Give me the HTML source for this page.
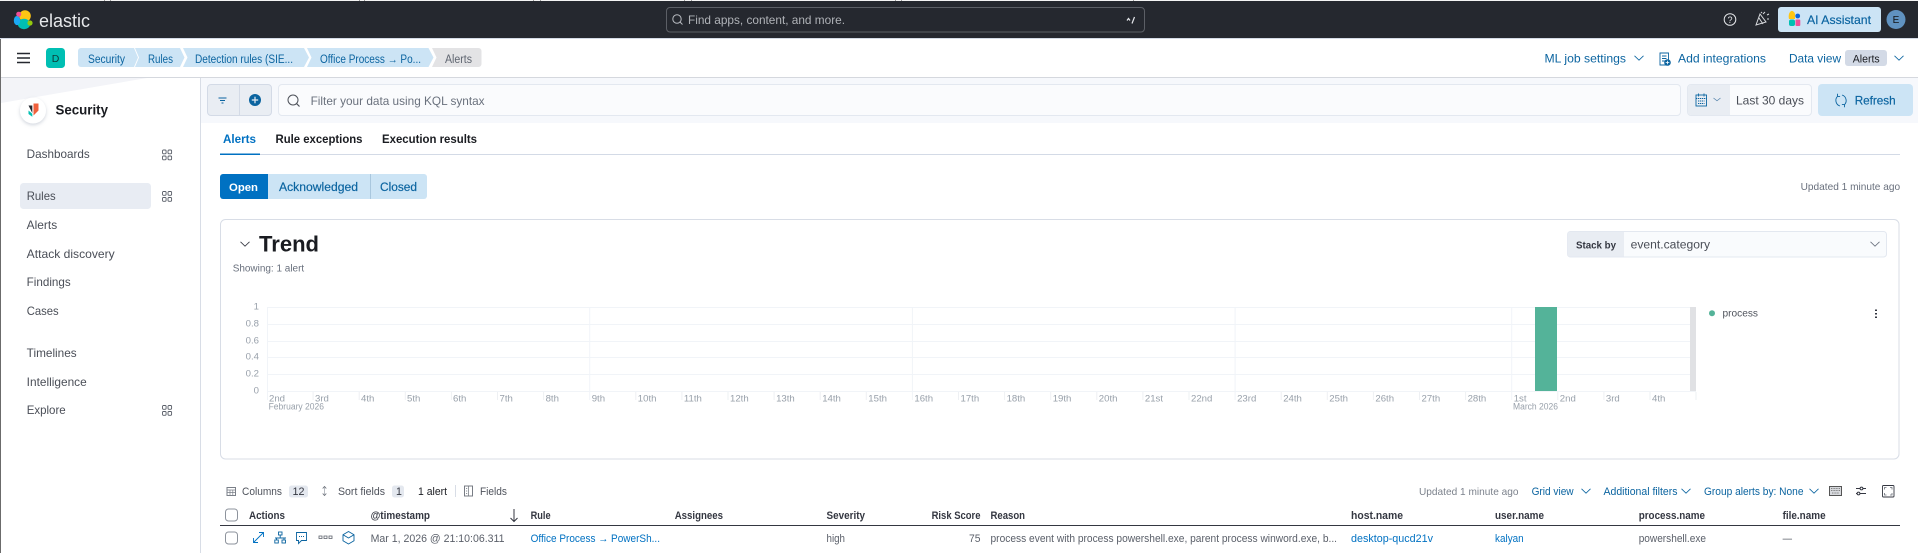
<!DOCTYPE html>
<html lang="en"><head><meta charset="utf-8"><title>Alerts - Elastic Security</title>
<style>
html,body{margin:0;padding:0;background:#fff;width:1918px;height:553px;overflow:hidden}
svg{display:block;position:absolute;left:0;top:0;filter:blur(.35px)}
text{font-family:"Liberation Sans",sans-serif;font-size:11.5px;fill:#343741;white-space:pre}
.nav{fill:#4a4e57;font-size:11.6px}
.blue{fill:#0b64a0}
.med{stroke:#0b64a0;stroke-width:.18px}
.link{fill:#0071c2;font-size:10.6px}
.b{font-weight:700}
.th{font-weight:700;font-size:10.6px;fill:#343741}
.td{font-size:10.6px;fill:#5a5f69}
.tb{font-size:10.6px;fill:#4f535c}
.tbb{font-size:10.6px;fill:#0b64a0}
.tick{font-size:9.6px;fill:#98a0aa}
.yl{font-size:9.6px;fill:#98a0aa;text-anchor:end}
.ic{fill:none;stroke:#0b64a0;stroke-width:.9}
.grid{stroke:#f1f4f8;stroke-width:1}
</style></head><body>
<svg width="1918" height="553" viewBox="0 0 1918 553" xmlns="http://www.w3.org/2000/svg">
<defs>
<path id="chev" d="M-4.5-2.200 0 2.200 4.500-2.200" fill="none" stroke-width=".85"/>
<g id="apps" fill="none" stroke="#5a5f69" stroke-width=".9"><rect x=".5" y=".5" width="3.600" height="3.800" rx="1"/><rect x="6" y=".5" width="3.600" height="3.800" rx="1"/><rect x=".5" y="6.500" width="3.600" height="3.800" rx="1"/><rect x="6" y="6.500" width="3.600" height="3.800" rx="1"/></g>
<filter id="sh" x="-40%" y="-40%" width="180%" height="180%"><feDropShadow dx="0" dy="1.500" stdDeviation="1.800" flood-color="#98a2b3" flood-opacity=".45"/></filter>
</defs>

<!-- top bar -->
<rect width="1918" height="1" fill="#f4f4f4"/>
<path d="M104.500 0v1M110.500 0v1M359.500 0v1M364.500 0v1M533.500 0v1M540.500 0v1M684.500 0v1M691.500 0v1M895.500 0v1M901.500 0v1M1133.500 0v1" stroke="#9a9a9a"/>
<rect y="1" width="1918" height="37" fill="#25282f"/>
<rect y="38" width="1918" height="1" fill="#d3dae6"/>
<g>
<circle cx="25" cy="16" r="5.800" fill="#fec514"/>
<ellipse cx="24" cy="24" rx="6.200" ry="5.200" fill="#00bfb3"/>
<ellipse cx="17" cy="20.500" rx="3.200" ry="4.600" fill="#1ba9f5"/>
<circle cx="18.700" cy="14.200" r="2.500" fill="#f04e98"/>
<circle cx="30" cy="23" r="2.600" fill="#93c90e"/>
</g>
<text x="39" y="27" style="font-size:18px;fill:#e6e8eb" textLength="51" lengthAdjust="spacingAndGlyphs">elastic</text>

<rect x="666.500" y="7.500" width="478" height="24.500" rx="3.500" fill="#25282f" stroke="#5c5f66"/>
<circle cx="677" cy="19" r="4.200" fill="none" stroke="#b9bcc2"/><path d="M680 22l2.500 2.500" stroke="#b9bcc2"/>
<text x="688" y="24.200" style="font-size:12px;fill:#b0b3b8" textLength="157" lengthAdjust="spacingAndGlyphs">Find apps, content, and more.</text>
<path d="M1127 20.500l1.500-2 1.500 2M1132 23.500l2.500-6.500" fill="none" stroke="#e4e6ea" stroke-width="1.200"/>

<circle cx="1730" cy="19.500" r="5.800" fill="none" stroke="#e6e8eb"/>
<text x="1730" y="22.800" style="font-size:9px;fill:#e6e8eb;text-anchor:middle">?</text>
<path d="M1756 25l4-11 6 8zM1759 18l4 6M1763 14l2-2M1767 15l2-1M1767 19l2 0M1761 13l1-1" fill="none" stroke="#d8dade"/>
<rect x="1778" y="7" width="103" height="25" rx="3" fill="#cce4f5"/>
<path d="M1789 19a3 5 0 0 1 6-5v5z" fill="#fec514"/>
<rect x="1789" y="19.500" width="6" height="6.500" rx="2" fill="#00bfb3"/>
<circle cx="1797.700" cy="16" r="2.400" fill="#0b64dd"/>
<rect x="1795.500" y="19.500" width="4.800" height="6.500" rx="1" fill="#f04e98"/>
<text x="1807" y="24.200" class="blue med" style="font-size:12px" textLength="64" lengthAdjust="spacingAndGlyphs">AI Assistant</text>
<circle cx="1896" cy="19.500" r="9.500" fill="#6092c0"/>
<text x="1896" y="23" style="font-size:10px;text-anchor:middle;fill:#111">E</text>

<!-- header -->
<path d="M17 53.500h13M17 58h13M17 62.500h13" stroke="#25282f" stroke-width="1.600"/>
<rect x="46" y="48" width="19" height="20" rx="3.500" fill="#00bfb3"/>
<text x="55.500" y="62" style="font-size:10.500px;text-anchor:middle;fill:#0d3b38">D</text>
<path d="M81 48H134L138 57.500 134 67H81a3 3 0 0 1-3-3V51a3 3 0 0 1 3-3Z" fill="#cce4f5"/>
<path d="M135 48H180L184.500 57.500 180 67H135L139 57.500Z" fill="#cce4f5"/>
<path d="M183 48H304L309 57.500 304 67H183L187.500 57.500Z" fill="#cce4f5"/>
<path d="M307 48H428.500L433.500 57.500 428.500 67H307L311.500 57.500Z" fill="#cce4f5"/>
<path d="M432 48H478.500a3 3 0 0 1 3 3V64a3 3 0 0 1-3 3H432L436.500 57.500Z" fill="#e3e3e5"/>
<text x="88" y="63" class="blue" textLength="37" lengthAdjust="spacingAndGlyphs">Security</text>
<text x="148" y="63" class="blue" textLength="25" lengthAdjust="spacingAndGlyphs">Rules</text>
<text x="195" y="63" class="blue" textLength="98" lengthAdjust="spacingAndGlyphs">Detection rules (SIE...</text>
<text x="320" y="63" class="blue" textLength="101" lengthAdjust="spacingAndGlyphs">Office Process → Po...</text>
<text x="445" y="63" style="fill:#5f6570" textLength="27" lengthAdjust="spacingAndGlyphs">Alerts</text>

<text x="1544.500" y="62.300" class="blue" style="font-size:12px" textLength="81.500" lengthAdjust="spacingAndGlyphs">ML job settings</text>
<use href="#chev" x="1639" y="58" stroke="#0b64a0"/>
<path d="M1660 53h8.500v12h-8.500z" class="ic"/><path d="M1662 56h4.500M1662 58.500h4.500M1662 61h3" class="ic"/><circle cx="1667.500" cy="62.500" r="3.300" fill="#0b64a0"/><path d="M1665.700 62.500h3.600M1667.500 60.700v3.600" stroke="#fff" stroke-width=".8"/>
<text x="1678" y="62.300" class="blue" style="font-size:12px" textLength="88" lengthAdjust="spacingAndGlyphs">Add integrations</text>
<text x="1789" y="62.300" class="blue" style="font-size:12px" textLength="52" lengthAdjust="spacingAndGlyphs">Data view</text>
<rect x="1845" y="50" width="42" height="16" rx="3" fill="#d3dae6"/>
<text x="1852.700" y="62.300" style="font-size:11px;fill:#1a1c21" textLength="27" lengthAdjust="spacingAndGlyphs">Alerts</text>
<use href="#chev" x="1899" y="58" stroke="#0b64a0"/>

<rect y="77" width="1918" height="1" fill="#d5d8de"/>

<!-- search row -->
<rect x="200" y="78" width="1718" height="45" fill="#f6f8fc"/>
<rect x="207.500" y="84.500" width="64" height="31" rx="3.500" fill="#e9edf3" stroke="#d3dae6"/>
<path d="M239.500 85v30" stroke="#d3dae6"/>
<path d="M218.500 98h8M220 100.500h5M221.500 103h2" stroke="#0b64a0"/>
<circle cx="255" cy="100" r="6" fill="#0b64a0"/><path d="M251.800 100h6.400M255 96.800v6.400" stroke="#e9edf3" stroke-width="1.200"/>
<rect x="278.500" y="84.500" width="1402" height="31" rx="3.500" fill="#fafbfd" stroke="#e3e8f0"/>
<circle cx="293" cy="100" r="5" fill="none" stroke="#4d5159"/><path d="M296.500 103.500l3 3" stroke="#4d5159" stroke-width="1.200"/>
<text x="310.600" y="105.200" style="font-size:12px;fill:#6a717d" textLength="174" lengthAdjust="spacingAndGlyphs">Filter your data using KQL syntax</text>
<rect x="1687.500" y="84.500" width="124" height="31" rx="3.500" fill="#fafbfd" stroke="#e3e8f0"/>
<path d="M1691 85H1730V115H1691a3 3 0 0 1-3-3V88a3 3 0 0 1 3-3z" fill="#e9edf3"/>
<rect x="1696" y="95" width="10.500" height="11" class="ic"/><path d="M1696 98.500h10.500M1698.500 93.500v3M1704 93.500v3M1698 101h6.500M1698 103.500h6.500" class="ic" stroke-dasharray="1.300 .7"/>
<path d="M1713.500 98l3.500 2.800 3.500-2.800" fill="none" stroke="#5a86ad" stroke-width=".8"/>
<text x="1736" y="104.300" style="font-size:12px;fill:#4a4e57" textLength="68" lengthAdjust="spacingAndGlyphs">Last 30 days</text>
<rect x="1818" y="84" width="95" height="32" rx="4" fill="#cce4f5"/>
<path d="M1837.700 96.200A5.800 5.800 0 0 0 1840 106M1844.300 104.800A5.800 5.800 0 0 0 1842 95M1837.500 93.800v2.600h2.600M1844.500 107.200v-2.600h-2.600" class="ic"/>
<text x="1854.700" y="104.300" class="blue med" style="font-size:12px" textLength="41" lengthAdjust="spacingAndGlyphs">Refresh</text>

<!-- sidebar -->
<rect x="0" y="39" width="1" height="514" fill="#6b6b6b"/>
<path d="M1 78H147L1 103Z" fill="#f3f4f8"/>
<rect x="200" y="78" width="1" height="475" fill="#d8dde6"/>
<circle cx="33" cy="110.500" r="13" fill="#fff" filter="url(#sh)"/>
<path d="M33.500 103.500h5v7l-5 5z" fill="#f0603c"/><path d="M28.500 105.500h3.800v7.500z" fill="#25282f"/><path d="M28.500 110.500l3.800 3.300v3l-3.800-2.800z" fill="#00bfb3"/>
<text x="55.500" y="114.300" class="b" style="font-size:13.500px;fill:#1a1c21" textLength="52.500" lengthAdjust="spacingAndGlyphs">Security</text>
<text x="26.700" y="158.200" class="nav" textLength="63" lengthAdjust="spacingAndGlyphs">Dashboards</text>
<use href="#apps" x="162" y="149.500"/>
<rect x="20" y="183" width="131" height="26" rx="3.500" fill="#e8ecf3"/>
<text x="26.700" y="200.200" class="nav" textLength="29" lengthAdjust="spacingAndGlyphs">Rules</text>
<use href="#apps" x="162" y="191"/>
<text x="26.700" y="229.200" class="nav" textLength="30.500" lengthAdjust="spacingAndGlyphs">Alerts</text>
<text x="26.700" y="258.200" class="nav" textLength="88" lengthAdjust="spacingAndGlyphs">Attack discovery</text>
<text x="26.700" y="286.200" class="nav" textLength="44" lengthAdjust="spacingAndGlyphs">Findings</text>
<text x="26.700" y="315.200" class="nav" textLength="32" lengthAdjust="spacingAndGlyphs">Cases</text>
<text x="26.700" y="357.200" class="nav" textLength="50" lengthAdjust="spacingAndGlyphs">Timelines</text>
<text x="26.700" y="386.200" class="nav" textLength="60" lengthAdjust="spacingAndGlyphs">Intelligence</text>
<text x="26.700" y="414.200" class="nav" textLength="39" lengthAdjust="spacingAndGlyphs">Explore</text>
<use href="#apps" x="162" y="405"/>

<!-- tabs -->
<rect x="220" y="154" width="1680" height="1" fill="#d3dae6"/>
<rect x="220" y="153.500" width="40" height="1.500" fill="#0071c2"/>
<text x="223" y="143.200" class="b" style="fill:#0071c2" textLength="33" lengthAdjust="spacingAndGlyphs">Alerts</text>
<text x="275.500" y="143.200" class="b" style="fill:#1a1c21" textLength="87" lengthAdjust="spacingAndGlyphs">Rule exceptions</text>
<text x="382" y="143.200" class="b" style="fill:#1a1c21" textLength="95" lengthAdjust="spacingAndGlyphs">Execution results</text>

<!-- status -->
<path d="M223 174H268V199H223a3 3 0 0 1-3-3V177a3 3 0 0 1 3-3z" fill="#0071c2"/>
<path d="M268 174H424a3 3 0 0 1 3 3V196a3 3 0 0 1-3 3H268z" fill="#cce4f5"/>
<rect x="370" y="174" width="1" height="25" fill="#a9c7de"/>
<text x="229" y="191" class="b" style="font-size:11px;fill:#fff" textLength="29" lengthAdjust="spacingAndGlyphs">Open</text>
<text x="279" y="191" class="blue med" style="font-size:11.500px" textLength="79" lengthAdjust="spacingAndGlyphs">Acknowledged</text>
<text x="380" y="191" class="blue med" style="font-size:11.500px" textLength="37" lengthAdjust="spacingAndGlyphs">Closed</text>
<text x="1800.600" y="190" style="font-size:10.300px;fill:#69707d" textLength="99.500" lengthAdjust="spacingAndGlyphs">Updated 1 minute ago</text>

<!-- trend panel -->
<rect x="220.500" y="219.500" width="1678.500" height="239.500" rx="5" fill="#fff" stroke="#d8dde6"/>
<use href="#chev" x="245" y="244" stroke="#343741"/>
<text x="259" y="251.700" class="b" style="font-size:22px;fill:#1a1c21" textLength="60" lengthAdjust="spacingAndGlyphs">Trend</text>
<text x="232.700" y="271.700" style="font-size:10px;fill:#69707d" textLength="71.500" lengthAdjust="spacingAndGlyphs">Showing: 1 alert</text>

<rect x="1567.500" y="231.500" width="319" height="25.500" rx="3" fill="#f9fbfd" stroke="#e3e8f0"/>
<path d="M1570 232H1624V256.500H1570a2.500 2.500 0 0 1-2.500-2.500V234.500a2.500 2.500 0 0 1 2.500-2.500z" fill="#e9edf3"/>
<text x="1576" y="248.700" class="b" style="font-size:10.300px" textLength="40" lengthAdjust="spacingAndGlyphs">Stack by</text>
<text x="1630.600" y="248.600" style="font-size:11.500px;fill:#4a4e57" textLength="79.500" lengthAdjust="spacingAndGlyphs">event.category</text>
<use href="#chev" x="1875" y="244" stroke="#69707d"/>

<!-- chart -->
<path class="grid" d="M267 307.500H1696M267 324.500H1696M267 341.500H1696M267 357.500H1696M267 374.500H1696M267 391.500H1696"/>
<path class="grid" d="M267.500 307V400M589.700 307V400M912.400 307V400M1235.100 307V400M1511.700 307V400"/>
<path stroke="#eef0f3" d="M313.100 392v8M359.200 392v8M405.300 392v8M451.400 392v8M497.500 392v8M543.600 392v8M635.800 392v8M681.900 392v8M728 392v8M774.100 392v8M820.200 392v8M866.300 392v8M958.500 392v8M1004.600 392v8M1050.700 392v8M1096.800 392v8M1142.900 392v8M1189 392v8M1281.200 392v8M1327.300 392v8M1373.400 392v8M1419.500 392v8M1465.600 392v8M1557.800 392v8M1603.900 392v8M1650 392v8M1696 392v8"/>
<rect x="1535" y="307" width="22" height="84" fill="#54b399"/>
<rect x="1690" y="307" width="6" height="84" fill="#e0e1e4"/>
<g>
<text class="yl" x="259" y="309.500">1</text><text class="yl" x="259" y="326.500">0.8</text><text class="yl" x="259" y="343.500">0.6</text><text class="yl" x="259" y="359.500">0.4</text><text class="yl" x="259" y="376.500">0.2</text><text class="yl" x="259" y="393.500">0</text>
<text class="tick" x="269" y="401.500">2nd</text><text class="tick" x="315" y="401.500">3rd</text><text class="tick" x="361" y="401.500">4th</text><text class="tick" x="407" y="401.500">5th</text><text class="tick" x="453" y="401.500">6th</text><text class="tick" x="499.500" y="401.500">7th</text><text class="tick" x="545.600" y="401.500">8th</text><text class="tick" x="591.700" y="401.500">9th</text><text class="tick" x="637.800" y="401.500">10th</text><text class="tick" x="683.900" y="401.500">11th</text><text class="tick" x="730" y="401.500">12th</text><text class="tick" x="776.100" y="401.500">13th</text><text class="tick" x="822.200" y="401.500">14th</text><text class="tick" x="868.300" y="401.500">15th</text><text class="tick" x="914.400" y="401.500">16th</text><text class="tick" x="960.500" y="401.500">17th</text><text class="tick" x="1006.600" y="401.500">18th</text><text class="tick" x="1052.700" y="401.500">19th</text><text class="tick" x="1098.800" y="401.500">20th</text><text class="tick" x="1144.900" y="401.500">21st</text><text class="tick" x="1191" y="401.500">22nd</text><text class="tick" x="1237.100" y="401.500">23rd</text><text class="tick" x="1283.200" y="401.500">24th</text><text class="tick" x="1329.300" y="401.500">25th</text><text class="tick" x="1375.400" y="401.500">26th</text><text class="tick" x="1421.500" y="401.500">27th</text><text class="tick" x="1467.600" y="401.500">28th</text><text class="tick" x="1513.700" y="401.500">1st</text><text class="tick" x="1559.800" y="401.500">2nd</text><text class="tick" x="1605.900" y="401.500">3rd</text><text class="tick" x="1652" y="401.500">4th</text>
<text class="tick" x="268.600" y="409.500" textLength="55.400" lengthAdjust="spacingAndGlyphs">February 2026</text>
<text class="tick" x="1513" y="409.500" textLength="45" lengthAdjust="spacingAndGlyphs">March 2026</text>
</g>
<circle cx="1712" cy="313.300" r="3" fill="#54b399"/>
<text x="1722.500" y="316.700" style="font-size:10.500px;fill:#4f535c" textLength="35.500" lengthAdjust="spacingAndGlyphs">process</text>
<path d="M1876 309.500v1.500M1876 313v1.500M1876 316.500v1.500" stroke="#343741" stroke-width="2"/>

<!-- table toolbar -->
<rect x="227" y="487.500" width="8.500" height="8" fill="none" stroke="#7a7f88"/><path d="M227 490h8.500M227 492.500h8.500M230 490v5.500M232.800 490v5.500" stroke="#7a7f88" stroke-width=".7"/>
<text class="tb" x="242" y="494.800" textLength="40" lengthAdjust="spacingAndGlyphs">Columns</text>
<rect x="289" y="485.500" width="19" height="12" rx="2.500" fill="#e4e8ef"/>
<text class="tb" x="292.500" y="495" style="fill:#343741" textLength="12" lengthAdjust="spacingAndGlyphs">12</text>
<path d="M319.800 488.500l-1.800-2-1.800 2M316.200 493.500l1.800 2 1.800-2" transform="translate(6.500 0)" fill="none" stroke="#6a6f78" stroke-width=".9"/>
<path d="M324.500 487.500v7" stroke="#9aa0a8" stroke-width=".7"/>
<text class="tb" x="338" y="494.800" textLength="47" lengthAdjust="spacingAndGlyphs">Sort fields</text>
<rect x="392" y="485.500" width="12" height="12" rx="2.500" fill="#e4e8ef"/>
<text class="tb" x="396" y="495" style="fill:#343741">1</text>
<text class="tb" x="418" y="495" style="fill:#1a1c21" textLength="29" lengthAdjust="spacingAndGlyphs">1 alert</text>
<rect x="455" y="485" width="1" height="12" fill="#d8dde6"/>
<rect x="464.500" y="486" width="8" height="10" fill="none" stroke="#6a6f78" stroke-width=".9"/><path d="M468.500 486v10M466 488.500h1.200M466 491h1.200M466 493.500h1.200" stroke="#6a6f78" stroke-width=".7"/>
<text class="tb" x="480" y="494.800" textLength="27" lengthAdjust="spacingAndGlyphs">Fields</text>

<text x="1419" y="494.800" style="font-size:10.500px;fill:#7c828c" textLength="99.500" lengthAdjust="spacingAndGlyphs">Updated 1 minute ago</text>
<text class="tbb" x="1531.600" y="494.800" textLength="42" lengthAdjust="spacingAndGlyphs">Grid view</text>
<use href="#chev" x="1586" y="491" stroke="#0b64a0"/>
<text class="tbb" x="1603.500" y="494.800" textLength="74" lengthAdjust="spacingAndGlyphs">Additional filters</text>
<use href="#chev" x="1686" y="491" stroke="#0b64a0"/>
<text class="tbb" x="1704" y="494.800" textLength="99.500" lengthAdjust="spacingAndGlyphs">Group alerts by: None</text>
<use href="#chev" x="1814" y="491" stroke="#0b64a0"/>
<rect x="1829.500" y="486.500" width="12" height="9" fill="#d8dade" stroke="#555"/><path d="M1831 488.500h9M1831 490.500h9M1832 493h7" stroke="#666" stroke-width=".8" stroke-dasharray="1 .6"/>
<path d="M1856 488.500h4M1863 488.500h3M1856 493.500h1M1860 493.500h6" stroke="#343741"/><circle cx="1861.500" cy="488.500" r="1.400" fill="none" stroke="#343741"/><circle cx="1858.500" cy="493.500" r="1.400" fill="none" stroke="#343741"/>
<rect x="1882.500" y="485.500" width="11.500" height="11.500" rx="1" fill="none" stroke="#343741" stroke-width=".9"/><path d="M1884.500 489.500v-2h2M1890 487.500h2v2M1892 493v2h-2M1886.500 495h-2v-2" fill="none" stroke="#6a6f78" stroke-width=".8"/>

<!-- table -->
<rect x="225.500" y="509" width="12" height="12" rx="3" fill="#fff" stroke="#8d939c"/>
<text class="th" x="249" y="518.800" textLength="36" lengthAdjust="spacingAndGlyphs">Actions</text>
<text class="th" x="370.600" y="518.800" textLength="59.400" lengthAdjust="spacingAndGlyphs">@timestamp</text>
<path d="M514 509v12.500M510.500 518l3.500 3.500 3.500-3.500" fill="none" stroke="#343741"/>
<text class="th" x="530.600" y="518.800" textLength="20" lengthAdjust="spacingAndGlyphs">Rule</text>
<text class="th" x="674.700" y="518.800" textLength="48.300" lengthAdjust="spacingAndGlyphs">Assignees</text>
<text class="th" x="826.500" y="518.800" textLength="38.500" lengthAdjust="spacingAndGlyphs">Severity</text>
<text class="th" x="931.600" y="518.800" textLength="48.900" lengthAdjust="spacingAndGlyphs">Risk Score</text>
<text class="th" x="990.500" y="518.800" textLength="34.500" lengthAdjust="spacingAndGlyphs">Reason</text>
<text class="th" x="1351" y="518.800" textLength="52" lengthAdjust="spacingAndGlyphs">host.name</text>
<text class="th" x="1495" y="518.800" textLength="49" lengthAdjust="spacingAndGlyphs">user.name</text>
<text class="th" x="1638.700" y="518.800" textLength="66.300" lengthAdjust="spacingAndGlyphs">process.name</text>
<text class="th" x="1782.600" y="518.800" textLength="43" lengthAdjust="spacingAndGlyphs">file.name</text>
<rect x="220" y="525" width="1680" height="1" fill="#343741"/>

<rect x="225.500" y="532" width="12" height="12" rx="3" fill="#fff" stroke="#8d939c"/>
<path d="M253.500 542.500l10-10M259 532.500h4.500v4.500M253.500 538v4.500h4.500" fill="none" stroke="#0071c2" stroke-width=".9"/>
<g fill="none" stroke="#0b64a0" stroke-width=".9"><rect x="278.500" y="532" width="3.500" height="3"/><rect x="274.800" y="540" width="3.500" height="3"/><rect x="282" y="540" width="3.500" height="3"/><path d="M275 538h11M280.200 535v3M276.500 538v2M284 538v2"/></g>
<path d="M296.500 532.500h10v8h-5l-3 3v-3h-2z" fill="none" stroke="#0b64a0" stroke-width=".9"/><path d="M299 536.500h1M301 536.500h1M303 536.500h1" stroke="#0b64a0"/>
<path d="M319 536h3v2.500h-3zM324 536h3v2.500h-3zM329 536h3v2.500h-3z" fill="none" stroke="#5a5f69" stroke-width=".8"/>
<path d="M348.500 531.500l5.500 3.200v6l-5.500 3.300-5.500-3.300v-6zM343 534.700l5.500 3.300 5.500-3.300" fill="none" stroke="#0b64a0" stroke-width=".9"/>
<text class="td" x="370.600" y="542" textLength="133.900" lengthAdjust="spacingAndGlyphs">Mar 1, 2026 @ 21:10:06.311</text>
<text class="link" x="530.600" y="542" textLength="129.400" lengthAdjust="spacingAndGlyphs">Office Process → PowerSh...</text>
<text class="td" x="826.500" y="542" textLength="18.500" lengthAdjust="spacingAndGlyphs">high</text>
<text class="td" x="969" y="542" textLength="11.500" lengthAdjust="spacingAndGlyphs">75</text>
<text class="td" x="990.500" y="542" textLength="346.500" lengthAdjust="spacingAndGlyphs">process event with process powershell.exe, parent process winword.exe, b...</text>
<text class="link" x="1351" y="542" textLength="82" lengthAdjust="spacingAndGlyphs">desktop-qucd21v</text>
<text class="link" x="1495" y="542" textLength="28.700" lengthAdjust="spacingAndGlyphs">kalyan</text>
<text class="td" x="1638.700" y="542" textLength="67.300" lengthAdjust="spacingAndGlyphs">powershell.exe</text>
<text class="td" x="1782.600" y="542" textLength="9.400" lengthAdjust="spacingAndGlyphs">—</text>
</svg>
</body></html>
